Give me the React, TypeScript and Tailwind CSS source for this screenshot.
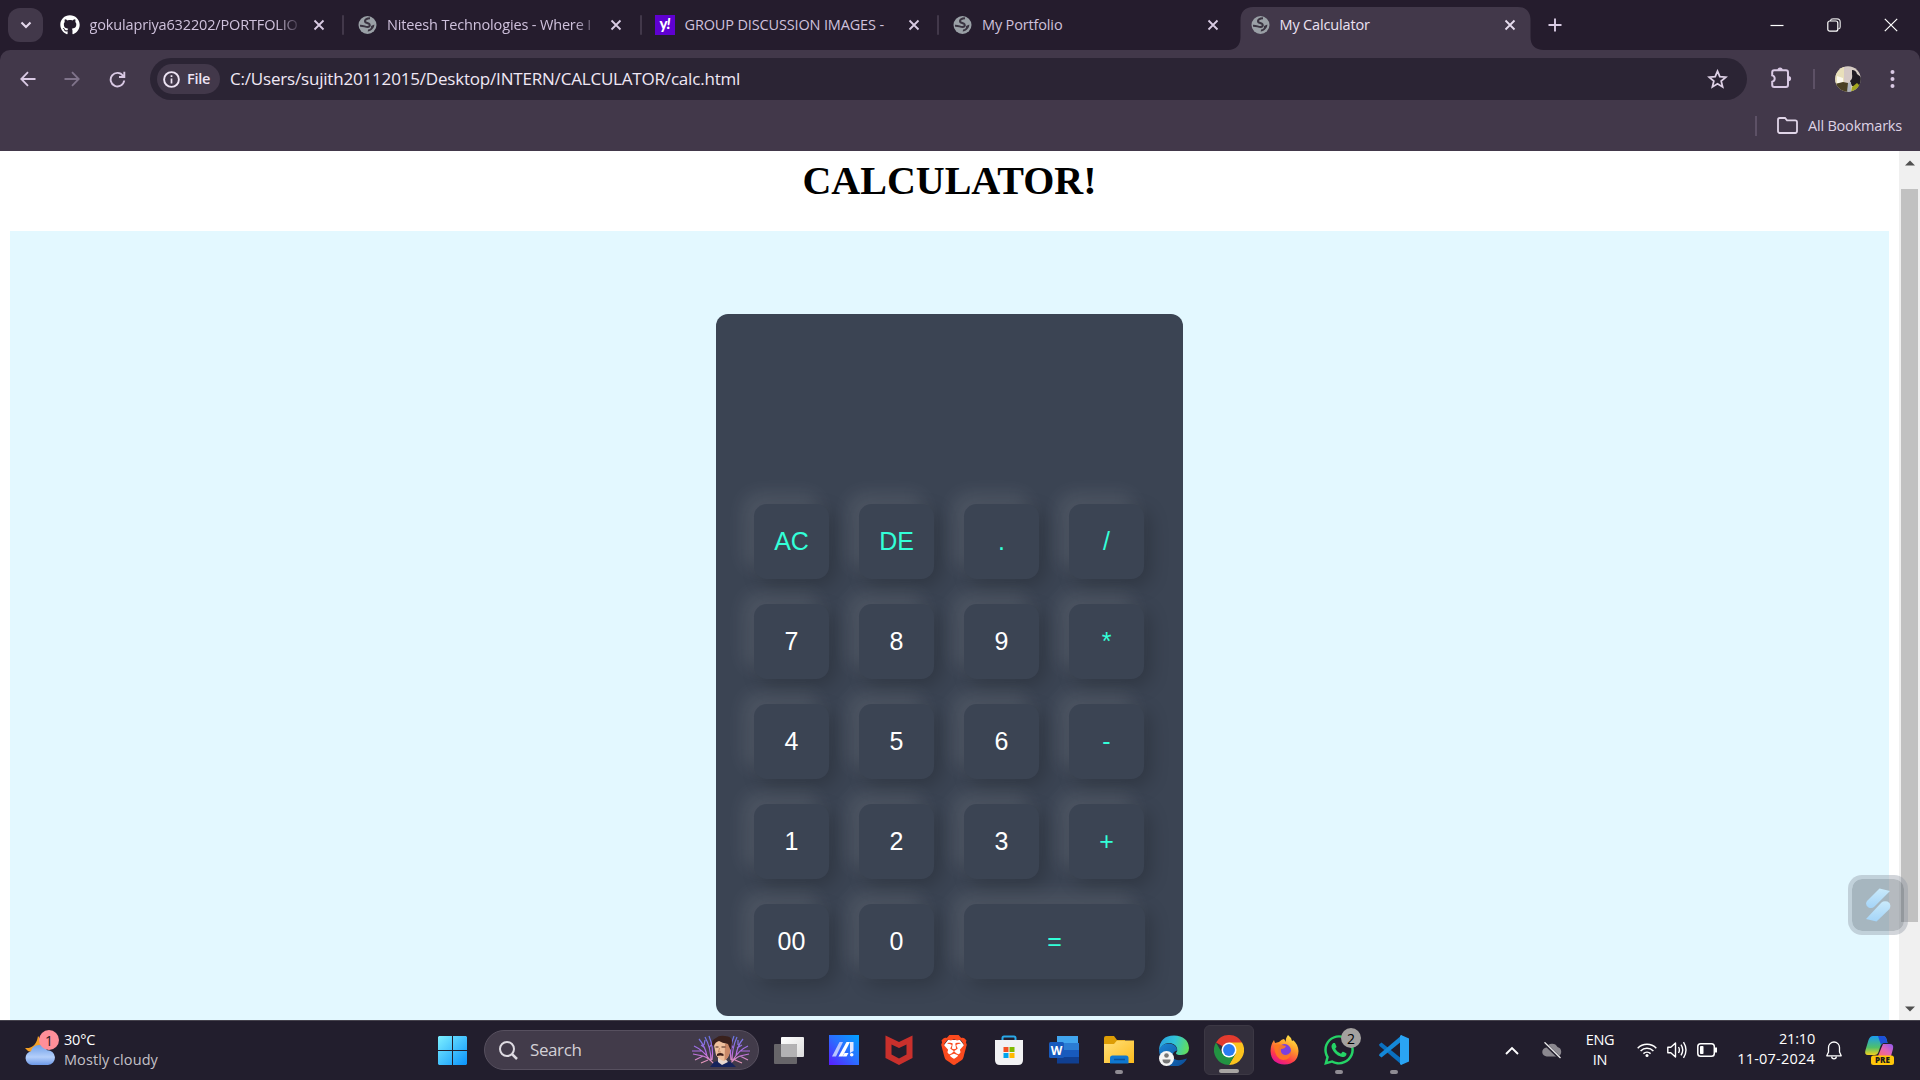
import React from "react";
import { FaGithub, FaWhatsapp } from "react-icons/fa";
import { SiBrave } from "react-icons/si";

const ui = "font-['Open_Sans','Noto_Sans',sans-serif]";

function Globe() {
  return (
    <svg width="20" height="20" viewBox="0 0 20 20">
      <circle cx="9.500" cy="10" r="9" fill="#9aa0a6" />
      <path
        d="M12 3.200C8.500 3.300 6.500 5 7 6.600c.5 1.600 3.600 1.200 4.500 2.700.9 1.700-.4 2.700-2 2.700-2.500 0-4-1.500-7.500-1.300"
        fill="none"
        stroke="#3a3441"
        strokeWidth="2"
      />
      <path d="M16.300 9.500c.3 3.300-2.800 6.500-6.600 7l.4-1.900c2-.2 3.200-1.600 3-3.700z" fill="#3a3441" />
    </svg>
  );
}

function Yahoo() {
  return (
    <span className="-ml-0.5 flex size-5 items-center justify-center bg-[#5f01d1] font-['Lato',sans-serif] text-[15px] leading-none font-black text-white">
      <span className="-mt-1 tracking-[-1px]">y<i>!</i></span>
    </span>
  );
}

function Cross({ color = "#d9cbe3" }: { color?: string }) {
  return (
    <svg width="12" height="12" viewBox="0 0 12 12">
      <path d="M1.500 1.500l9 9M10.500 1.500l-9 9" stroke={color} strokeWidth="1.800" />
    </svg>
  );
}

interface TabData {
  title: string;
  icon: React.ReactNode;
  active?: boolean;
  sep?: boolean;
  fade?: boolean;
}

const tabs: TabData[] = [
  { title: "gokulapriya632202/PORTFOLIO", icon: <FaGithub size={20} color="#fff" className="-ml-0.5" />, sep: true, fade: true },
  { title: "Niteesh Technologies - Where I", icon: <Globe />, sep: true, fade: true },
  { title: "GROUP DISCUSSION IMAGES -", icon: <Yahoo />, sep: true },
  { title: "My Portfolio", icon: <Globe /> },
  { title: "My Calculator", icon: <Globe />, active: true },
];

function Tab({ title, icon, active, sep, fade }: TabData) {
  return (
    <div className="relative flex h-[50px] w-[297.5px] shrink-0 items-center pl-3.5">
      {active && (
        <svg className="absolute bottom-0 left-[-9px]" width="316" height="43" viewBox="0 0 316 43">
          <path d="M0 43C8 43 12.500 38 12.500 30V13C12.500 5 17 0 25 0H290C298 0 302.500 5 302.500 13V30C302.500 38 307 43 316 43Z" fill="#42384a" />
        </svg>
      )}
      <span className="relative flex size-5 shrink-0 items-center justify-center">{icon}</span>
      <span
        className={`relative ml-[9px] w-[210px] text-[14.5px] tracking-[-0.15px] whitespace-nowrap ${fade ? "[mask-image:linear-gradient(to_right,#000_90%,transparent_102%)]" : ""} ${active ? "text-[#ece2f2]" : "text-[#cfc1dc]"}`}
      >
        {title}
      </span>
      <span className="relative ml-[14.5px] flex">
        <Cross color={active ? "#e6dcee" : "#d9cbe3"} />
      </span>
      {sep && <span className="ml-[17.5px] h-5 w-0.5 rounded bg-[#42384a]" />}
    </div>
  );
}

function TabStrip() {
  return (
    <div className="flex h-[50px] bg-[#251c2d]">
      <div className="mt-2 ml-2 mr-[3.5px] flex h-[34px] w-[35px] shrink-0 items-center justify-center rounded-xl bg-[#42384a]">
        <svg width="12" height="8" viewBox="0 0 12 8">
          <path d="M1.500 1.500L6 6l4.500-4.500" stroke="#e4d8ec" strokeWidth="2.100" fill="none" />
        </svg>
      </div>
      {tabs.map((t) => (
        <Tab key={t.title} {...t} />
      ))}
      <svg className="mt-[18px] ml-[14px]" width="14" height="14" viewBox="0 0 14 14">
        <path d="M7 .5v13M.5 7h13" stroke="#d9cbe3" strokeWidth="1.900" />
      </svg>
      <div className="ml-auto flex h-[49px] items-center gap-[43px] pr-[22px]">
        <svg width="14" height="14" viewBox="0 0 14 14"><path d="M.5 7.500h13" stroke="#fff" strokeWidth="1.200" /></svg>
        <svg width="14" height="14" viewBox="0 0 14 14" fill="none" stroke="#fff" strokeWidth="1.200">
          <rect x=".8" y="3" width="10" height="10.200" rx="2" />
          <path d="M3.500 3V2.500Q3.800.8 6 .8H10Q13.200.8 13.200 4v5q0 1.800-2 2" opacity=".85" />
        </svg>
        <svg width="14" height="14" viewBox="0 0 14 14"><path d="M.8.8l12.400 12.400M13.200.8L.8 13.200" stroke="#fff" strokeWidth="1.200" /></svg>
      </div>
    </div>
  );
}

function Avatar() {
  return (
    <svg width="26" height="26" viewBox="0 0 26 26">
      <defs>
        <clipPath id="av"><circle cx="13" cy="13" r="12.800" /></clipPath>
      </defs>
      <g clipPath="url(#av)">
        <rect width="26" height="26" fill="#d6ccc4" />
        <path d="M0 4L9 0v20H0z" fill="#e8dfba" />
        <path d="M2 10l6 2v5H2z" fill="#fbf8ec" />
        <path d="M9 2h7v12H9z" fill="#d4c8c6" />
        <path d="M17 4q4 0 5 4l4 3v10l-9-1-2-5q3-2 2-7z" fill="#1f1a22" />
        <path d="M0 18l8-2 5 1v9H2z" fill="#4a4023" />
        <path d="M13 17l3-1v10h-4z" fill="#aeb4bd" />
        <path d="M17 21l5-4 3 3v7h-9z" fill="#a3a51f" />
      </g>
    </svg>
  );
}

function Toolbar() {
  return (
    <div className="bg-[#251c2d]">
      <div className="flex h-[101px] flex-col rounded-t-[10px] bg-[#42384a] pt-2">
        <div className="flex h-[42px] shrink-0 items-center">
          <svg className="ml-5 shrink-0" width="16" height="16" viewBox="0 0 16 16" fill="none" stroke="#d9c9e4" strokeWidth="1.800"><path d="M15.500 8H1.500M8 1.200L1.300 8 8 14.800" /></svg>
          <svg className="ml-7 shrink-0" width="16" height="16" viewBox="0 0 16 16" fill="none" stroke="#7f738a" strokeWidth="1.800"><path d="M.5 8h14M8 1.200L14.700 8 8 14.800" /></svg>
          <svg className="ml-[29px] shrink-0" width="17" height="17" viewBox="0 0 17 17" fill="none" stroke="#d9c9e4" strokeWidth="1.900">
            <path d="M14 4.700A6.800 6.800 0 1 0 15.200 9.500M15.300.8V6H10" />
          </svg>
          <div className="ml-6 flex h-[42px] w-[1597px] items-center rounded-full bg-[#2b2434] pl-[7px]">
            <div className="flex h-[30px] w-[63px] items-center rounded-full bg-[#42384a] pl-1.5">
              <svg width="17" height="17" viewBox="0 0 17 17" fill="none" stroke="#eee4f4">
                <circle cx="8.500" cy="8.500" r="7.400" strokeWidth="1.900" />
                <path d="M8.500 7.500v5M8.500 4.300v1.800" strokeWidth="1.700" />
              </svg>
              <span className="ml-[7px] text-[14.5px] font-semibold tracking-[-0.3px] text-[#eee4f4]">File</span>
            </div>
            <span className="ml-2.5 text-[17px] tracking-[-0.19px] text-[#f0e8f5]">
              C:/Users/sujith20112015/Desktop/INTERN/CALCULATOR/calc.html
            </span>
            <svg className="ml-auto mr-[19px]" width="21" height="20" viewBox="0 0 21 20" fill="none" stroke="#ddd0e5" strokeWidth="1.800">
              <path d="M10.500 2.200l2.300 5.500 6 .5-4.600 3.900 1.400 5.800-5.100-3.100-5.100 3.100 1.400-5.800L2.200 8.200l6-.5z" />
            </svg>
          </div>
          <svg className="-mt-1 ml-[23px] shrink-0" width="23" height="23" viewBox="0 0 23 23">
            <path d="M2.200 6.200Q2.200 4.200 4.200 4.200H16q2 0 2 2V19q0 2-2 2H4.200q-2 0-2-2v-3.200a3.300 3.300 0 0 0 0-6.400z" fill="none" stroke="#d9c9e4" strokeWidth="2" />
            <path d="M7.500 4a2.600 2.600 0 0 1 5.200 0zM18.500 10a2.600 2.600 0 0 1 0 5.200z" fill="#d9c9e4" />
          </svg>
          <span className="ml-[20px] h-5 w-0.5 bg-[#5d5166]" />
          <span className="ml-[20px]"><Avatar /></span>
          <svg className="ml-[29px]" width="5" height="20" viewBox="0 0 5 20" fill="#d9c9e4"><circle cx="2.500" cy="3" r="2" /><circle cx="2.500" cy="10" r="2" /><circle cx="2.500" cy="17" r="2" /></svg>
        </div>
        <div className="flex flex-1 items-center justify-end pr-[18px]">
          <span className="h-5 w-0.5 bg-[#5d5166]" />
          <svg className="ml-5" width="21" height="17" viewBox="0 0 21 17" fill="none" stroke="#e0d5e8" strokeWidth="1.800">
            <path d="M1 2.800Q1 1 2.800 1H8l2 2.300h8.200q1.800 0 1.800 1.800v9q0 1.900-1.800 1.900H2.800Q1 16 1 14.100z" />
          </svg>
          <span className="ml-2.5 text-[14.5px] tracking-[-0.2px] text-[#ddd2e4]">All Bookmarks</span>
        </div>
      </div>
    </div>
  );
}

const keys: { label: string; op?: boolean; wide?: boolean }[] = [
  { label: "AC", op: true }, { label: "DE", op: true }, { label: ".", op: true }, { label: "/", op: true },
  { label: "7" }, { label: "8" }, { label: "9" }, { label: "*", op: true },
  { label: "4" }, { label: "5" }, { label: "6" }, { label: "-", op: true },
  { label: "1" }, { label: "2" }, { label: "3" }, { label: "+", op: true },
  { label: "00" }, { label: "0" }, { label: "=", op: true, wide: true },
];

function Calculator() {
  return (
    <div className="h-[702px] w-[467px] rounded-xl bg-[#3b4453] pt-[190px] pl-[38px]">
      <div className="grid grid-cols-[repeat(4,75px)] gap-x-[30px] gap-y-[25px]">
        {keys.map((k) => (
          <button
            key={k.label}
            className={`h-[75px] rounded-[12.5px] bg-[#3b4453] pb-px font-['Liberation_Sans',Arial,sans-serif] text-[25px] leading-none shadow-[-10px_-10px_18.75px_rgba(255,255,255,0.1),6.25px_6.25px_18.75px_rgba(0,0,0,0.2)] ${k.op ? "text-[#33ffd8]" : "text-white"} ${k.wide ? "col-span-2 w-[181px]" : "w-[75px]"}`}
          >
            {k.label}
          </button>
        ))}
      </div>
    </div>
  );
}

function Page() {
  return (
    <div className="relative flex h-[869px] overflow-hidden bg-white">
      <div className="w-[1899px] px-2.5">
        <h1 className="flex h-20 items-start justify-center pt-[7px] font-['Liberation_Serif','Times_New_Roman',serif] text-[40px] leading-[46px] font-bold text-black">
          CALCULATOR!
        </h1>
        <div className="flex h-[789px] justify-center bg-[#e3f8ff] pt-[83px]">
          <Calculator />
        </div>
      </div>
      <div className="flex w-[21px] flex-col items-center bg-[#f0f0f0]">
        <svg className="mt-[9px]" width="10" height="6" viewBox="0 0 10 6"><path d="M0 5.500L5 .5l5 5z" fill="#505050" /></svg>
        <div className="mt-[23px] h-[733px] w-[17px] bg-[#c1c1c1]" />
        <svg className="mt-auto mb-[8px]" width="10" height="6" viewBox="0 0 10 6"><path d="M0 .5h10l-5 5z" fill="#505050" /></svg>
      </div>
      <div className="absolute top-[724px] left-[1848px] flex size-[60px] items-center justify-center rounded-[14px] border-4 border-[#8f95a3]/40 bg-[#5b6570]/45 bg-clip-padding">
        <svg width="26" height="34" viewBox="0 0 26 34">
          <defs>
            <linearGradient id="wg" x1="0" y1="0" x2="0" y2="1"><stop offset="0" stopColor="#c9eafb" /><stop offset="1" stopColor="#a4d4f8" /></linearGradient>
          </defs>
          <path d="M14.500.5L25 3 9.500 18.500Q7 21 3.500 19.500-.5 17 2 13z" fill="url(#wg)" />
          <path d="M11.500 33.500L1 31 16.500 14.500Q18.500 12.500 22.500 13.500 27 16 24.500 21z" fill="url(#wg)" />
        </svg>
      </div>
    </div>
  );
}

function Weather() {
  return (
    <div className="relative ml-[25px] h-9 w-[30px]">
      <svg width="30" height="36" viewBox="0 0 30 36">
        <defs>
          <linearGradient id="cl" x1="0" y1="0" x2="0" y2="1"><stop offset="0" stopColor="#6f9fe8" /><stop offset=".6" stopColor="#b4cffa" /><stop offset="1" stopColor="#6c98e6" /></linearGradient>
        </defs>
        <path d="M13 4q5 5 3 11-3 6-10 5-4-1-6-4 11 1 13-12z" fill="#f4a024" />
        <path d="M7 33a7 7 0 0 1-1-13.800 8.500 8.500 0 0 1 16-1A7.400 7.400 0 0 1 23 33z" fill="url(#cl)" />
      </svg>
      <span className="absolute top-[-2px] left-[14px] flex size-5 items-center justify-center rounded-full bg-[#ff8f99] text-[14px] text-[#2a1a20]">1</span>
    </div>
  );
}

function StartLogo() {
  return (
    <svg width="29" height="29" viewBox="0 0 29 29">
      <defs><linearGradient id="win" gradientUnits="userSpaceOnUse" x1="0" y1="0" x2="29" y2="29"><stop offset="0" stopColor="#7df0ff" /><stop offset="1" stopColor="#0a93fb" /></linearGradient></defs>
      <path d="M1 0H14V14H0V1zM15 0H28l1 1V14H15zM0 15H14V29H1l-1-1zM15 15H29V28l-1 1H15z" fill="url(#win)" />
    </svg>
  );
}

function Portrait() {
  return (
    <svg width="60" height="34" viewBox="0 0 60 34">
      <defs>
        <linearGradient id="bolt" gradientUnits="userSpaceOnUse" x1="0" y1="0" x2="0" y2="34"><stop offset="0" stopColor="#5a78e8" /><stop offset=".55" stopColor="#b86be4" /><stop offset="1" stopColor="#ffb0a0" /></linearGradient>
      </defs>
      <g fill="none" stroke="url(#bolt)" strokeWidth="1.200">
        <path d="M24 31Q18 24 12 22L2 20M19 26Q12 16 3 12M16 22Q14 12 8 5M20 27Q20 14 14 3M21 26Q23 14 18 2M12 22L4 26M10 17L1 17M14 14L10 11M18 14L22 8M17 26L10 29M13 11L14 6" />
        <path d="M38 31Q44 24 49 22L58 20M42 26Q48 16 57 12M45 22Q46 12 52 5M41 27Q41 14 46 3M40 26Q38 14 43 2M49 22L57 26M50 17L59 17M46 14L51 11M42 14L39 8M44 26L51 29M47 11L47 6" />
      </g>
      <path d="M19 33l4-5 8-2 9 2 5 5z" fill="#16245c" />
      <path d="M27 24h7l3 4-6 3-4-3z" fill="#e8d8cf" />
      <path d="M22.500 9q2-4 8-4t8 4l.5 8q-1 7-6 10-5-1-8-6z" fill="#efc19e" />
      <path d="M34 10l5-1v8q-1 7-5.500 9.500z" fill="#c98867" />
      <path d="M21 11q-1-5 4-7 3-3 9-2 7 0 7 6 0 5-1.500 8L37 10q-6-1-9-3-4 1-5 5z" fill="#3a211d" />
      <path d="M26 20q3-2 6.500 0v2q-3-1-6.500 0z" fill="#3c1d18" />
      <path d="M24.500 13h3M30.500 13h4" stroke="#4a2820" strokeWidth="1.200" />
      <path d="M28.500 14l-1 4h2.500" stroke="#b77c5c" strokeWidth=".8" fill="none" />
    </svg>
  );
}

function SearchBox() {
  return (
    <div className="ml-[17px] flex h-10 w-[275px] shrink-0 items-center rounded-full border border-[#57505f] bg-[#423b4a] pl-3.5">
      <svg width="19" height="19" viewBox="0 0 19 19" fill="none" stroke="#dedbe2" strokeWidth="2"><circle cx="8" cy="8" r="7" /><path d="M12.800 12.800l5.200 5.200" strokeWidth="2.500" /></svg>
      <span className="ml-3 text-[17px] tracking-[-0.4px] text-[#d3d0d6]">Search</span>
      <span className="mt-px ml-auto mr-[7px]"><Portrait /></span>
    </div>
  );
}

const TaskView = () => (
  <svg width="30" height="29" viewBox="0 0 30 29">
    <defs><linearGradient id="tv" x1="0" y1="0" x2="1" y2="1"><stop offset="0" stopColor="#fff" /><stop offset="1" stopColor="#dcdcdc" /></linearGradient></defs>
    <rect x="7" y="1" width="23" height="20" rx="1" fill="url(#tv)" />
    <rect y="8" width="23" height="20" rx="1" fill="#6f6d70" opacity=".9" />
    <path d="M7 8h15a1 1 0 0 1 1 1v12H8a1 1 0 0 1-1-1z" fill="#b3b2b4" />
  </svg>
);
const MyAsus = () => (
  <svg width="30" height="30" viewBox="0 0 30 30">
    <defs><linearGradient id="ma" x1="0" y1="1" x2="1" y2="0"><stop offset="0" stopColor="#5a1cff" /><stop offset=".5" stopColor="#2b6dff" /><stop offset="1" stopColor="#00a2ff" /></linearGradient></defs>
    <rect width="30" height="30" fill="url(#ma)" />
    <path d="M3 21.500L10.500 7H14L7 21.500z" fill="#b9c6ff" />
    <path d="M9.500 21.500L17.500 7H21L13.500 21.500z" fill="#fff" />
    <path d="M21 7h3.500v9L21 18z" fill="#dfe7ff" />
    <path d="M15.500 18h4l-2 3.500h-4z" fill="#fff" />
    <circle cx="22.700" cy="19.700" r="1.800" fill="#fff" />
  </svg>
);
const McAfee = () => (
  <svg width="28" height="30" viewBox="0 0 28 30">
    <path d="M.5.5L14 7 27.500.5V23L14 30 .5 23z" fill="#c9302c" />
    <path d="M6.500 9.500L14 13l7.500-3.500v10L14 23.500l-7.500-4z" fill="#221e2d" />
  </svg>
);
const Brave = () => (
  <span className="relative flex h-[30px] w-[30px] items-center justify-center">
    <svg className="absolute top-0 left-0" width="30" height="30" viewBox="0 0 30 30">
      <path d="M9 5h12l4 5-2.500 11L15 27l-7.500-6L5 10z" fill="#fff" />
    </svg>
    <SiBrave size={30} color="#fb4a1e" className="relative" />
  </span>
);
const Store = () => (
  <svg width="30" height="30" viewBox="0 0 30 30">
    <path d="M8.500 6V3q0-1.500 1.500-1.500h10q1.500 0 1.500 1.500v3" fill="none" stroke="#29a9ea" strokeWidth="2" />
    <path d="M1 5h28v20q0 5-5 5H6q-5 0-5-5z" fill="#f2f2f4" />
    <path d="M9.500 12H14.500v5H9.500z" fill="#f25022" /><path d="M15.500 12h5v5h-5z" fill="#7fba00" /><path d="M9.500 18h5v5h-5z" fill="#00a4ef" /><path d="M15.500 18h5v5h-5z" fill="#ffb900" />
  </svg>
);
const Word = () => (
  <svg width="30" height="28" viewBox="0 0 30 28">
    <path d="M8 0h21v7H8z" fill="#41a5ee" /><path d="M8 7h22v7H8z" fill="#2b7cd3" /><path d="M8 14h22v7H8z" fill="#185abd" /><path d="M8 21h22v6.500H8z" fill="#103f91" />
    <rect x="0" y="6" width="15" height="16" rx="1.500" fill="#185abd" />
    <text x="7.500" y="18.500" textAnchor="middle" fontSize="12" fontWeight="700" fill="#fff" fontFamily="Open Sans">W</text>
  </svg>
);
const Explorer = () => (
  <svg width="30" height="28" viewBox="0 0 30 28">
    <defs><linearGradient id="fo" x1="0" y1="0" x2="1" y2="1"><stop offset="0" stopColor="#ffe07a" /><stop offset="1" stopColor="#fdbb1c" /></linearGradient></defs>
    <path d="M0 2q0-2 2-2h8l3 4h8v6H0z" fill="#dd9d05" /><path d="M0 8h10l3-3.500h17V27H0z" fill="url(#fo)" />
    <path d="M6 27.500V22q0-2.500 2.500-2.500h13.500q2.500 0 2.500 2.500v5.500z" fill="#0f78d0" /><path d="M10 23.500h11" stroke="#0a529b" strokeWidth="1.500" />
  </svg>
);
const Edge = () => (
  <svg width="30" height="31" viewBox="0 0 30 31">
    <defs>
      <linearGradient id="e1" x1="0" y1=".3" x2="1" y2=".5"><stop offset="0" stopColor="#2a9fe0" /><stop offset=".5" stopColor="#31c4d8" /><stop offset="1" stopColor="#62dd5c" /></linearGradient>
      <linearGradient id="e2" x1="0" y1="0" x2="1" y2="1"><stop offset="0" stopColor="#1b86d6" /><stop offset="1" stopColor="#0b4a94" /></linearGradient>
    </defs>
    <path d="M0 15Q3 8 10 8.500q8 1 8 7-6 2-4 7 3 5 14 1-4 8-13 8Q1 30 0 15z" fill="url(#e2)" />
    <path d="M0 15Q1 .5 15 .5 29 1 30 13q0 7-8 7-5 0-5-2 2-2 1-5-2-5-9-5-6 1-9 7z" fill="url(#e1)" />
    <circle cx="7.500" cy="23.500" r="7.500" fill="#f5f5f5" /><circle cx="7.500" cy="20.500" r="2.300" fill="#777" /><path d="M3.500 24.500h8q0 4-4 4t-4-4z" fill="#777" />
  </svg>
);
const Chrome = () => (
  <svg width="30" height="30" viewBox="0 0 48 48">
    <path d="M24 24L3.200 12A24 24 0 0 1 44.800 12z" fill="#e33b2e" />
    <path d="M24 12H44.800A24 24 0 0 1 24 48L34.400 30z" fill="#fcc31e" />
    <path d="M13.600 30L3.200 12A24 24 0 0 0 24 48L34.400 30z" fill="#229342" />
    <circle cx="24" cy="24" r="12" fill="#fff" /><circle cx="24" cy="24" r="9.500" fill="#2a7cf0" />
  </svg>
);
const Firefox = () => (
  <svg width="29" height="30" viewBox="0 0 29 30">
    <defs><linearGradient id="fx" x1=".8" y1="0" x2=".3" y2="1"><stop offset="0" stopColor="#fff04a" /><stop offset=".4" stopColor="#ff9a2a" /><stop offset=".75" stopColor="#ff3b4a" /><stop offset="1" stopColor="#e0109a" /></linearGradient></defs>
    <path d="M18 0q3 2 4 6 1 0 1-1 5 4 5.500 11Q28 29 14.500 29.500 1 29 .5 16 .5 10 4 5l1 3 4-1q3-3 5-3l2 3Q15 4 18 0z" fill="url(#fx)" />
    <circle cx="14.500" cy="15.500" r="6.500" fill="#7a3fe0" /><path d="M4 11q4-3 8-1l4 1q-1 3-5 3-1 5 4 6 4 0 6-4 0 9-8 9-8-1-9-14z" fill="#ff7a1e" opacity=".9" />
  </svg>
);
const WhatsApp = () => (
  <span className="relative">
    <FaWhatsapp size={34} color="#25d366" className="-m-0.5" />
    <span className="absolute top-[-7px] left-[17px] flex size-5 items-center justify-center rounded-full bg-[#a3a19f] text-[14px] text-black">2</span>
  </span>
);
const VSCode = () => (
  <svg width="30" height="30" viewBox="0 0 30 30">
    <path d="M0 9.500l2.500-2L23 24v6L0.500 11z" fill="#0a70c0" /><path d="M0 20.500l2.500 2L23 6V0L.5 19z" fill="#1488d8" />
    <path d="M22 0l8 3.500v23L22 30l-1-1V1z" fill="#2aa4f4" />
  </svg>
);

const apps: { icon: React.ReactNode; name: string; bar?: string; active?: boolean }[] = [
  { name: "taskview", icon: <TaskView /> },
  { name: "myasus", icon: <MyAsus /> },
  { name: "mcafee", icon: <McAfee /> },
  { name: "brave", icon: <Brave /> },
  { name: "store", icon: <Store /> },
  { name: "word", icon: <Word /> },
  { name: "explorer", icon: <Explorer />, bar: "w-2 bg-[#8f8c93]" },
  { name: "edge", icon: <Edge /> },
  { name: "chrome", icon: <Chrome />, bar: "w-5 bg-[#a8a5a3]", active: true },
  { name: "firefox", icon: <Firefox /> },
  { name: "whatsapp", icon: <WhatsApp />, bar: "w-2 bg-[#8f8c93]" },
  { name: "vscode", icon: <VSCode />, bar: "w-2 bg-[#8f8c93]" },
];

function Tray() {
  return (
    <div className="ml-auto flex h-full items-center pr-[26px] text-[14.5px] leading-5 text-white">
      <svg width="14" height="9" viewBox="0 0 14 9" fill="none" stroke="#fff" strokeWidth="1.900"><path d="M1 8l6-6 6 6" /></svg>
      <svg className="ml-[23px]" width="20" height="17" viewBox="0 0 20 17">
        <path d="M5 14.500a4.500 4.500 0 0 1-.5-9A6 6 0 0 1 15.500 5 5 5 0 0 1 16 14.500z" fill="#8b888f" /><path d="M2 .8l16 15.500" stroke="#221e2d" strokeWidth="3" /><path d="M2.500 .3l16 15.700" stroke="#f0f0f0" strokeWidth="1.300" />
      </svg>
      <div className="ml-[22px] w-[32px] text-center tracking-[-0.3px]"><div>ENG</div><div>IN</div></div>
      <svg className="ml-[21px]" width="20" height="16" viewBox="0 0 20 16" fill="none" stroke="#fff" strokeWidth="1.500">
        <path d="M.7 6.200a13 13 0 0 1 18.600 0M3.600 9a9 9 0 0 1 12.800 0M6.400 11.600a5.200 5.200 0 0 1 7.200 0" /><circle cx="10" cy="13.500" r="1.500" fill="#fff" stroke="none" />
      </svg>
      <svg className="ml-2.5" width="20" height="18" viewBox="0 0 20 18" fill="none" stroke="#fff" strokeWidth="1.400">
        <path d="M.8 6.200h3L8.500 2v14l-4.700-4.200h-3z" strokeLinejoin="round" /><path d="M11.500 6q1.800 3 0 6M14 3.700q3.500 5.300 0 10.600M16.500 1.200q5 7.800 0 15.600" />
      </svg>
      <svg className="ml-2.5" width="21" height="14" viewBox="0 0 21 14"><rect x=".8" y=".8" width="16.500" height="12.400" rx="2.800" fill="none" stroke="#fff" strokeWidth="1.500" /><rect x="3" y="3" width="3.500" height="8" rx=".8" fill="#fff" /><path d="M17.500 4.500h2.500v5h-2.500z" fill="#fff" /></svg>
      <div className="-mt-[3px] ml-[18px] w-[79px] text-right whitespace-nowrap">
        <div className="tracking-[-0.2px]">21:10</div>
        <div className="tracking-[0.22px]">11-07-2024</div>
      </div>
      <svg className="ml-[11px]" width="16" height="19" viewBox="0 0 16 19" fill="none" stroke="#fff" strokeWidth="1.300">
        <path d="M8 1a5.500 5.500 0 0 0-5.500 5.500V11L.8 14.800h14.400L13.500 11V6.500A5.500 5.500 0 0 0 8 1z" strokeLinejoin="round" /><path d="M5.700 15.500a2.300 2.300 0 0 0 4.600 0" />
      </svg>
      <svg className="ml-[22px]" width="30" height="29" viewBox="0 0 30 29">
        <defs>
          <linearGradient id="cp1" x1="0" y1="0" x2="0" y2="1"><stop offset="0" stopColor="#1a9df0" /><stop offset=".6" stopColor="#4fc06a" /><stop offset="1" stopColor="#f3d21f" /></linearGradient>
          <linearGradient id="cp2" x1="0" y1="1" x2="1" y2="0"><stop offset="0" stopColor="#ff6a6a" /><stop offset=".5" stopColor="#e265b8" /><stop offset="1" stopColor="#8d58f0" /></linearGradient>
        </defs>
        <path d="M9 0h10q2.500 0 3.500 3l1 4h-4q-2 0-3 3l-2 6q-1 3-4 3H4Q0 19 1.500 14l3-10Q6 0 9 0z" fill="url(#cp1)" />
        <path d="M14 0h5q2.500 0 3.500 3l1 4h-4q-2 0-2.500 2z" fill="#1d51d8" />
        <path d="M19 8h7q4 0 3 5l-2 7H14z" fill="url(#cp2)" />
        <rect x="7" y="19.500" width="23" height="9.500" rx="2.500" fill="#ffc60a" />
        <text x="18.500" y="27" textAnchor="middle" fontSize="8" fontWeight="800" fill="#1b1b1b" fontFamily="Open Sans">PRE</text>
      </svg>
    </div>
  );
}

function Taskbar() {
  return (
    <div className="flex h-[60px] items-center border-t border-[#45424c] bg-[#221e2d] pb-px">
      <div className="flex w-[438px] shrink-0 items-center">
        <Weather />
        <div className="-mt-px ml-[9px] text-[14.5px] leading-5">
          <div className="tracking-[-0.2px] text-white">30°C</div>
          <div className="tracking-[0.08px] text-[#c4c1c8]">Mostly cloudy</div>
        </div>
      </div>
      <StartLogo />
      <SearchBox />
      <div className="ml-[2.5px] flex">
        {apps.map((a) => (
          <div key={a.name} className="flex h-[50px] w-[55px] justify-center">
            <div className={`relative flex h-[50px] w-[50px] shrink-0 items-center justify-center rounded-md ${a.active ? "border border-[#3c3844] bg-[#332f3c]" : ""}`}>
              {a.icon}
              {a.bar && <span className={`absolute bottom-px left-1/2 h-1 -translate-x-1/2 rounded-full ${a.bar}`} />}
            </div>
          </div>
        ))}
      </div>
      <Tray />
    </div>
  );
}

export default function App() {
  return (
    <div className={`h-[1080px] w-[1920px] overflow-hidden ${ui}`}>
      <TabStrip />
      <Toolbar />
      <Page />
      <Taskbar />
    </div>
  );
}
